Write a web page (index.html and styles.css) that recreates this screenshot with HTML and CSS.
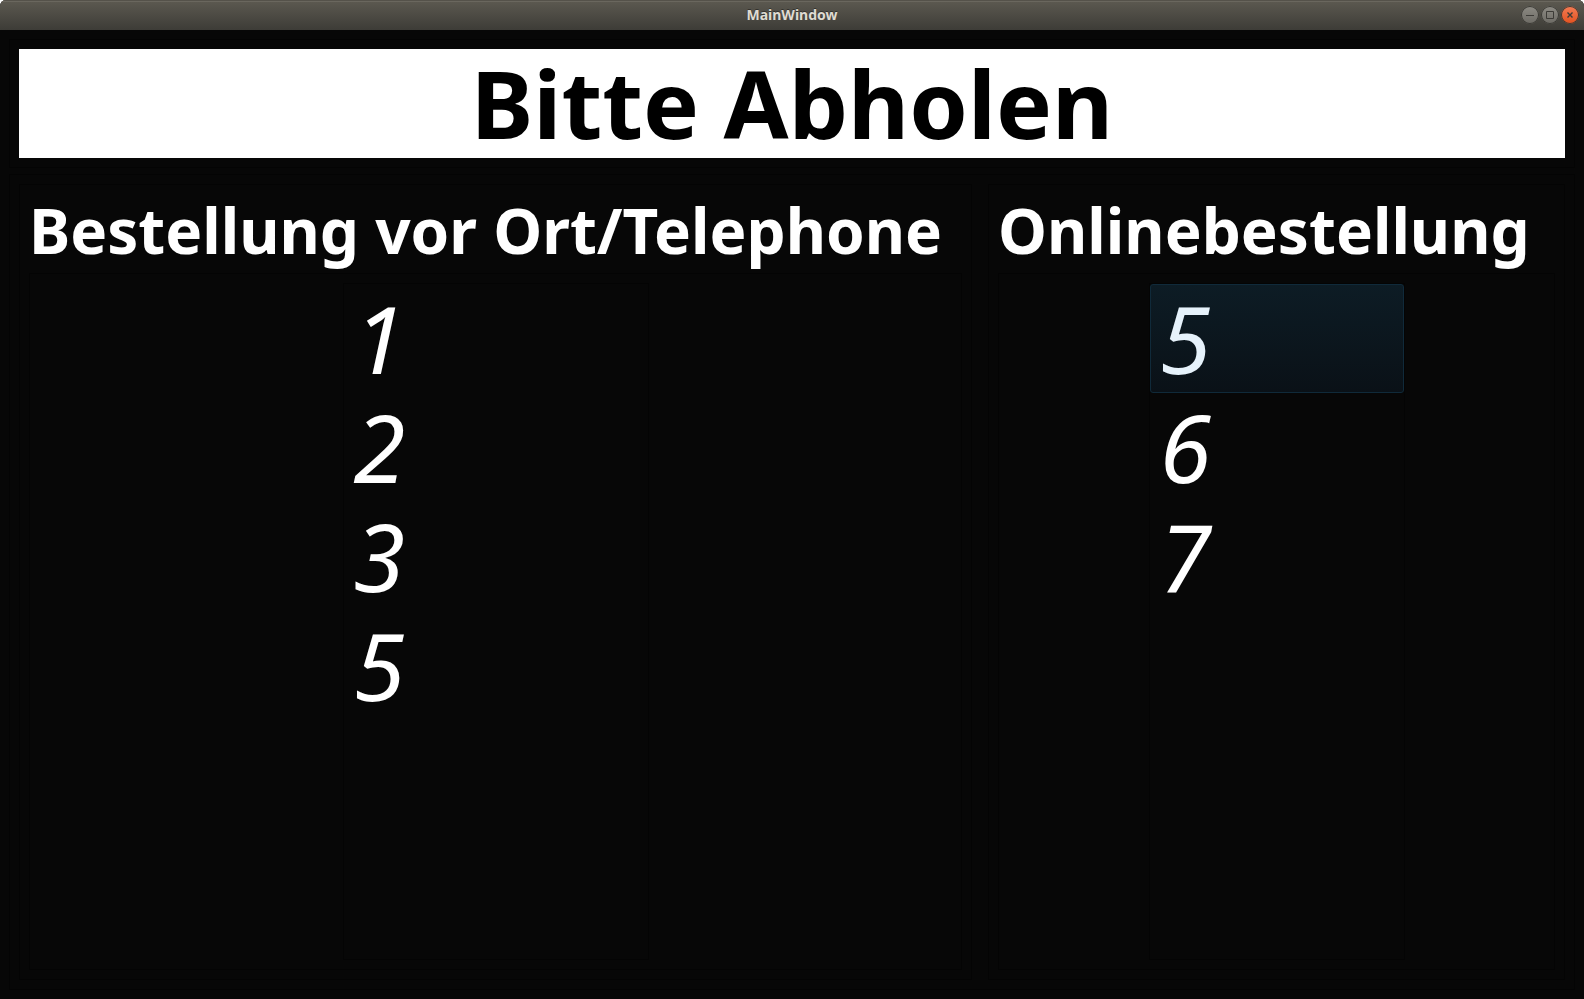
FILE: index.html
```html
<!DOCTYPE html>
<html lang="de">
<head>
<meta charset="utf-8">
<title>MainWindow</title>
<link rel="stylesheet" href="styles.css">
</head>
<body>
<div class="window">
  <header class="titlebar">
    <span class="titlebar-text">MainWindow</span>
    <div class="controls">
      <button class="control" type="button" aria-label="Minimieren"><svg viewBox="0 0 18 18"><path d="M5 9.5h8"/></svg></button>
      <button class="control" type="button" aria-label="Maximieren"><svg viewBox="0 0 18 18"><path d="M5.5 5.5h7v7h-7z"/></svg></button>
      <button class="control control-close" type="button" aria-label="Schließen"><svg viewBox="0 0 18 18"><path d="M6.5 6.5l5 5M11.5 6.5l-5 5" stroke-width="1.4"/></svg></button>
    </div>
  </header>
  <main class="content">
    <div class="frame">
      <h1 class="banner">Bitte Abholen</h1>
    </div>
    <div class="frame columns">
      <section class="panel">
        <h2 class="heading">Bestellung vor Ort/Telephone</h2>
        <div class="inner">
          <ul class="list list-wide">
            <li class="item">1</li>
            <li class="item">2</li>
            <li class="item">3</li>
            <li class="item">5</li>
          </ul>
        </div>
      </section>
      <section class="panel">
        <h2 class="heading">Onlinebestellung</h2>
        <div class="inner">
          <ul class="list">
            <li class="item item-selected">5</li>
            <li class="item">6</li>
            <li class="item">7</li>
          </ul>
        </div>
      </section>
    </div>
  </main>
</div>
</body>
</html>
```
FILE: styles.css
```css
* { box-sizing: border-box; }
body { margin: 0; background: #fff; font-family: "Noto Sans", sans-serif; }
.window {
  display: flex; flex-direction: column; min-height: 100vh;
  background: #070707; color: #fff;
  border-radius: 6px 6px 0 0; overflow: hidden;
}
.titlebar {
  display: grid; grid-template-columns: 1fr auto 1fr; align-items: center;
  height: 30px; padding: 0 5px;
  background: linear-gradient(#5d5a51, #3d3c37);
  box-shadow: inset 0 1px #55524a, inset 0 2px #6a675e;
}
.titlebar-text { grid-column: 2; font-size: 14px; font-weight: 700; line-height: 20px; color: #dfdbd2; text-shadow: 0 -1px #33322e; }
.controls { display: flex; gap: 2px; justify-content: flex-end; }
.control {
  width: 18px; height: 18px; padding: 0; border: 0; border-radius: 50%;
  background: linear-gradient(#8d8b84, #6c6a64); box-shadow: inset 0 0 0 1px #3b3a35;
}
.control svg { display: block; width: 18px; height: 18px; fill: none; stroke: #3c3b37; }
.control-close { background: linear-gradient(#f47c55, #e2511f); }
.content { flex: 1; display: flex; flex-direction: column; gap: 6px; padding: 9px; }
.frame { padding: 9px; border: 1px solid #040404; }
.banner { margin: 0; background: #fff; color: #000; text-align: center; font-size: 94px; line-height: 109px; font-weight: 700; }
.columns { flex: 1; display: grid; grid-template-columns: minmax(0, 953fr) minmax(0, 577fr); gap: 16px; }
.panel { display: flex; flex-direction: column; padding: 9px; border: 1px solid #040404; white-space: nowrap; }
.heading { margin: 0 0 6px; font-size: 62px; line-height: 73px; font-weight: 700; }
.inner { flex: 1; display: flex; justify-content: center; padding: 9px; border: 1px solid #040404; }
.list { width: 256px; margin: 0; padding: 0; list-style: none; border: 1px solid #040404; }
.list-wide { width: 306px; }
.item { padding: 0 9px; border: 1px solid transparent; font-size: 94px; line-height: 107px; font-style: italic; }
.item-selected { border-color: #102a3a; border-radius: 3px; background: linear-gradient(#0d1c25, #0a1117); color: #e6f2fb; }
```
